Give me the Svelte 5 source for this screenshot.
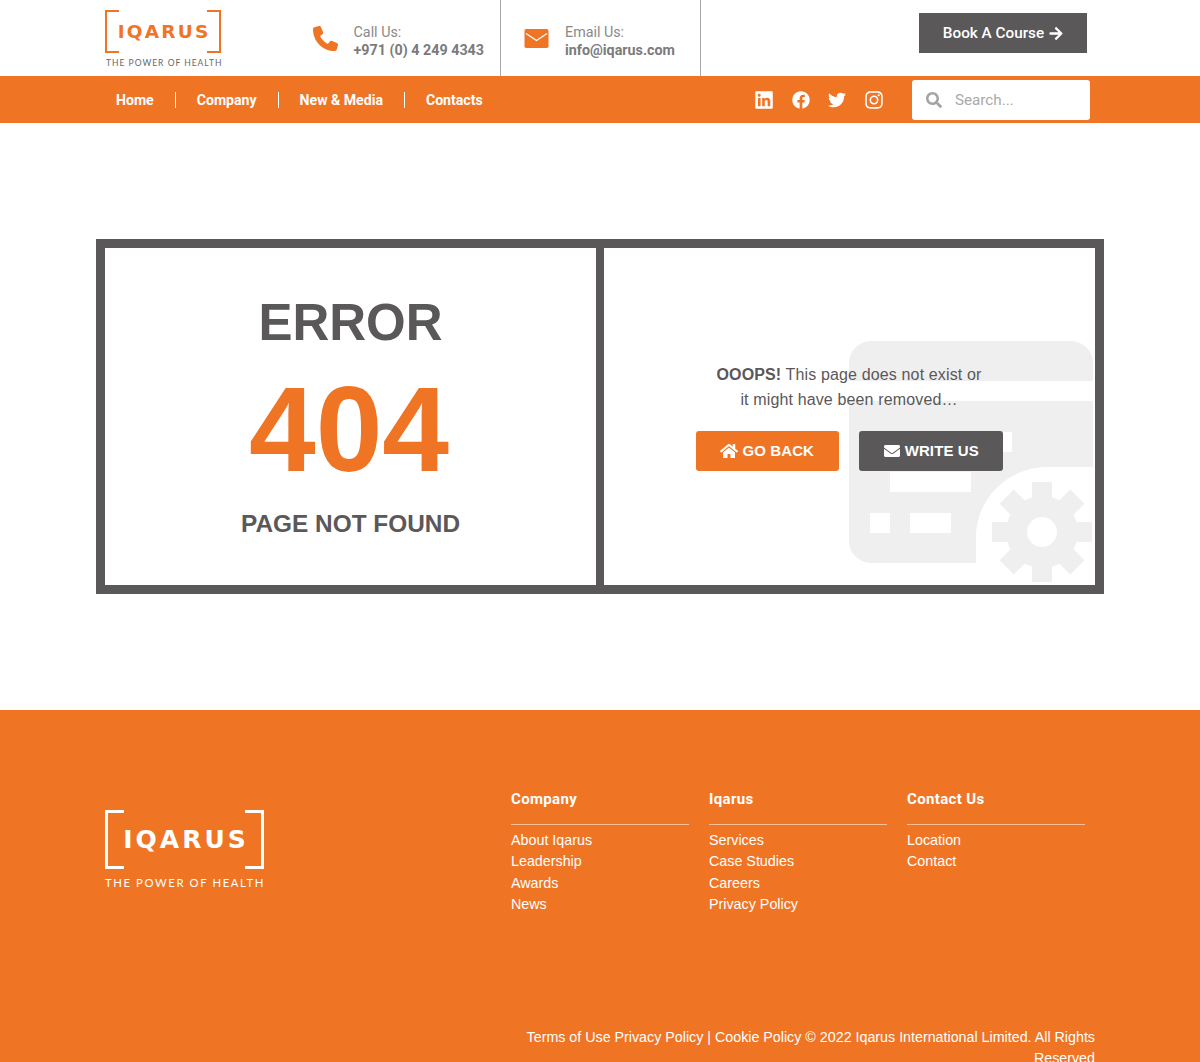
<script>
  const nav = ['Home', 'Company', 'New & Media', 'Contacts'];
  const cols = [
    { title: 'Company', links: ['About Iqarus', 'Leadership', 'Awards', 'News'] },
    { title: 'Iqarus', links: ['Services', 'Case Studies', 'Careers', 'Privacy Policy'] },
    { title: 'Contact Us', links: ['Location', 'Contact'] }
  ];
  const teeth = [0, 45, 90, 135, 180, 225, 270, 315];
</script>

<div class="page">
  <header class="top">
    <div class="logo">
      <div class="mark">
        <span class="word">IQARUS</span>
      </div>
      <div class="tag">THE POWER OF HEALTH</div>
    </div>
    <div class="contact call">
      <svg class="ci phone" viewBox="0 0 512 512"><path d="M164.900 24.600c-7.700-18.600-28-28.500-47.400-23.200l-88 24C12.100 30.200 0 46 0 64C0 311.400 200.600 512 448 512c18 0 33.800-12.100 38.600-29.500l24-88c5.300-19.400-4.600-39.700-23.200-47.400l-96-40c-16.300-6.800-35.200-2.100-46.300 11.600L304.700 368C234.300 334.700 177.300 277.700 144 207.300L193.300 167c13.700-11.200 18.400-30 11.600-46.300l-40-96z"/></svg>
      <div class="ct"><span>Call Us:</span><b>+971 (0) 4 249 4343</b></div>
    </div>
    <div class="contact email">
      <svg class="ci env" viewBox="0 0 24 19"><rect width="24" height="19" rx="1.800"/><path d="M1.500 4.500 12 11.500 22.500 4.500" fill="none" stroke="#fff" stroke-width="1.300"/></svg>
      <div class="ct"><span>Email Us:</span><b>info@iqarus.com</b></div>
    </div>
    <a class="book" href="#book">Book A Course
      <svg viewBox="0 0 448 512"><path d="M190.500 66.900l22.200-22.200c9.400-9.400 24.600-9.400 33.900 0L441 239c9.400 9.400 9.400 24.600 0 33.900L246.600 467.300c-9.400 9.400-24.600 9.400-33.900 0l-22.200-22.200c-9.500-9.500-9.300-25 .4-34.300L311.400 296H24c-13.300 0-24-10.700-24-24v-32c0-13.300 10.700-24 24-24h287.400L190.900 101.200c-9.800-9.300-10-24.800-.4-34.300z"/></svg>
    </a>
  </header>

  <nav class="bar">
    <ul class="menu">
      {#each nav as item}<li><a href="#x">{item}</a></li>{/each}
    </ul>
    <div class="social">
      <svg viewBox="0 0 448 512"><path d="M416 32H31.900C14.300 32 0 46.500 0 64.300v383.400C0 465.500 14.300 480 31.900 480H416c17.600 0 32-14.500 32-32.300V64.300c0-17.800-14.400-32.300-32-32.300zM135.400 416H69V202.200h66.500V416zm-33.200-243c-21.300 0-38.500-17.300-38.500-38.500S80.900 96 102.200 96c21.200 0 38.500 17.300 38.500 38.500 0 21.300-17.200 38.500-38.500 38.500zm282.100 243h-66.400V312c0-24.800-.5-56.700-34.500-56.700-34.600 0-39.900 27-39.900 54.900V416h-66.400V202.200h63.700v29.200h.9c8.900-16.800 30.600-34.500 62.900-34.500 67.200 0 79.700 44.300 79.700 101.900V416z"/></svg>
      <svg viewBox="0 0 512 512"><path d="M504 256C504 119 393 8 256 8S8 119 8 256c0 123.780 90.690 226.380 209.250 245V327.690h-63V256h63v-54.640c0-62.150 37-96.480 93.670-96.480 27.140 0 55.520 4.840 55.520 4.840v61h-31.280c-30.800 0-40.410 19.120-40.410 38.730V256h68.780l-11 71.690h-57.780V501C413.310 482.380 504 379.780 504 256z"/></svg>
      <svg viewBox="0 0 512 512"><path d="M459.370 151.716c.325 4.548.325 9.097.325 13.645 0 138.720-105.583 298.558-298.558 298.558-59.452 0-114.680-17.219-161.137-47.106 8.447.974 16.568 1.299 25.340 1.299 49.055 0 94.213-16.568 130.274-44.832-46.132-.975-84.792-31.188-98.112-72.772 6.498.974 12.995 1.624 19.818 1.624 9.421 0 18.843-1.3 27.614-3.573-48.081-9.747-84.143-51.980-84.143-102.985v-1.299c13.969 7.797 30.214 12.670 47.431 13.319-28.264-18.843-46.781-51.005-46.781-87.391 0-19.492 5.197-37.360 14.294-52.954 51.655 63.675 129.300 105.258 216.365 109.807-1.624-7.797-2.599-15.918-2.599-24.040 0-57.828 46.782-104.934 104.934-104.934 30.213 0 57.502 12.670 76.670 33.137 23.715-4.548 46.456-13.320 66.599-25.340-7.798 24.366-24.366 44.833-46.132 57.827 21.117-2.273 41.584-8.122 60.426-16.243-14.292 20.791-32.161 39.308-52.628 54.253z"/></svg>
      <svg viewBox="0 0 448 512"><path d="M224.100 141c-63.600 0-114.900 51.300-114.900 114.900s51.300 114.900 114.900 114.900S339 319.500 339 255.900 287.700 141 224.100 141zm0 189.600c-41.100 0-74.700-33.500-74.700-74.700s33.500-74.700 74.700-74.700 74.700 33.500 74.700 74.700-33.600 74.700-74.700 74.700zm146.400-194.300c0 14.900-12 26.800-26.800 26.800-14.900 0-26.800-12-26.800-26.800s12-26.800 26.800-26.800 26.800 12 26.800 26.800zm76.100 27.200c-1.700-35.900-9.900-67.700-36.200-93.900-26.200-26.200-58-34.400-93.900-36.200-37-2.100-147.900-2.100-184.900 0-35.800 1.700-67.600 9.900-93.900 36.100s-34.400 58-36.200 93.900c-2.100 37-2.100 147.900 0 184.900 1.700 35.900 9.900 67.700 36.200 93.900s58 34.400 93.900 36.200c37 2.100 147.900 2.100 184.900 0 35.900-1.700 67.700-9.900 93.900-36.200 26.200-26.200 34.400-58 36.200-93.900 2.100-37 2.100-147.800 0-184.800zM398.800 388c-7.800 19.600-22.900 34.700-42.600 42.600-29.500 11.700-99.500 9-132.100 9s-102.700 2.600-132.100-9c-19.600-7.800-34.700-22.900-42.600-42.600-11.700-29.500-9-99.500-9-132.100s-2.600-102.700 9-132.100c7.800-19.600 22.900-34.700 42.600-42.600 29.500-11.700 99.500-9 132.100-9s102.700-2.600 132.100 9c19.600 7.800 34.700 22.900 42.600 42.600 11.700 29.500 9 99.500 9 132.100s2.700 102.700-9 132.100z"/></svg>
    </div>
    <label class="search">
      <svg viewBox="0 0 512 512"><path d="M505 442.700L405.300 343c-4.500-4.500-10.600-7-17-7H372c27.600-35.300 44-79.700 44-128C416 93.100 322.900 0 208 0S0 93.100 0 208s93.100 208 208 208c48.300 0 92.700-16.400 128-44v16.300c0 6.400 2.500 12.500 7 17l99.700 99.700c9.400 9.400 24.600 9.400 33.900 0l28.300-28.300c9.400-9.400 9.400-24.600.1-34zM208 336c-70.700 0-128-57.200-128-128 0-70.700 57.200-128 128-128 70.700 0 128 57.200 128 128 0 70.700-57.200 128-128 128z"/></svg>
      <input type="text" placeholder="Search..." />
    </label>
  </nav>

  <main class="main">
    <section class="frame">
      <div class="left">
        <h1>ERROR</h1>
        <div class="code">404</div>
        <h2>PAGE NOT FOUND</h2>
      </div>
      <div class="right">
        <svg class="bg" viewBox="0 0 244 245" width="244" height="245" aria-hidden="true">
          <rect x="0" y="1" width="244" height="222" rx="22" fill="#efefef"/>
          <rect x="0" y="41" width="244" height="20" fill="#fff"/>
          <rect x="82" y="92" width="81" height="20" fill="#fff"/>
          <rect x="41" y="132" width="81" height="20" fill="#fff"/>
          <rect x="21" y="173" width="20" height="20" fill="#fff"/>
          <rect x="61" y="173" width="41" height="20" fill="#fff"/>
          <path d="M127 245V197C127 158 160 127 198 127H244V245Z" fill="#fff"/>
          <g fill="#efefef">
            {#each teeth as a}
              <rect x="183" y="142" width="20" height="30" transform="rotate({a} 193 192)"/>
            {/each}
            <path fill-rule="evenodd" d="M193 156a36 36 0 1 0 .01 0ZM193 177a15 15 0 1 1-.01 0Z"/>
          </g>
        </svg>
        <div class="msg">
          <p><b>OOOPS!</b> This page does not exist or<br />it might have been removed…</p>
          <div class="btns">
            <a class="btn orange" href="#back">
              <svg viewBox="0 0 576 512"><path d="M280.370 148.260L96 300.110V464a16 16 0 0 0 16 16l112.060-.29a16 16 0 0 0 15.920-16V368a16 16 0 0 1 16-16h64a16 16 0 0 1 16 16v95.640a16 16 0 0 0 16 16.050L464 480a16 16 0 0 0 16-16V300L295.670 148.260a12.190 12.190 0 0 0-15.300 0zM571.600 251.470L488 182.560V44.050a12 12 0 0 0-12-12h-56a12 12 0 0 0-12 12v72.610L318.470 43a48 48 0 0 0-61 0L4.340 251.470a12 12 0 0 0-1.600 16.900l25.500 31A12 12 0 0 0 45.150 301l235.220-193.740a12.190 12.190 0 0 1 15.300 0L530.900 301a12 12 0 0 0 16.900-1.600l25.500-31a12 12 0 0 0-1.700-16.930z"/></svg>
              GO BACK
            </a>
            <a class="btn grey" href="#write">
              <svg viewBox="0 0 512 512"><path d="M502.300 190.800c3.900-3.100 9.700-.2 9.700 4.700V400c0 26.500-21.500 48-48 48H48c-26.500 0-48-21.500-48-48V195.600c0-5 5.700-7.800 9.700-4.700 22.400 17.400 52.100 39.500 154.100 113.600 21.100 15.400 56.700 47.800 92.200 47.600 35.700.3 72-32.800 92.300-47.600 102-74.100 131.600-96.300 154-113.700zM256 320c23.200.4 56.600-29.200 73.400-41.400 132.700-96.300 142.800-104.700 173.400-128.700 5.800-4.500 9.200-11.500 9.200-18.900v-19c0-26.500-21.500-48-48-48H48C21.500 64 0 85.500 0 112v19c0 7.400 3.400 14.300 9.200 18.900 30.600 23.900 40.700 32.400 173.400 128.700 16.800 12.200 50.200 41.800 73.400 41.400z"/></svg>
              WRITE US
            </a>
          </div>
        </div>
      </div>
    </section>
  </main>

  <footer class="foot">
    <div class="fmain">
      <div class="flogo">
        <div class="fmark"><span class="fword">IQARUS</span></div>
        <div class="ftag">THE POWER OF HEALTH</div>
      </div>
      <div class="cols">
        {#each cols as c}
          <div class="col">
            <h4>{c.title}</h4>
            <ul>
              {#each c.links as l}<li><a href="#l">{l}</a></li>{/each}
            </ul>
          </div>
        {/each}
      </div>
    </div>
    <p class="legal">Terms of Use Privacy Policy | Cookie Policy © 2022 Iqarus International Limited. All Rights Reserved</p>
  </footer>
</div>

<style>
  :global(body) { margin: 0; background: #fff; }
  .page { height: 1062px; overflow: hidden; font-family: "Liberation Sans", Arial, sans-serif; color: #5a5859; }
  a { color: inherit; text-decoration: none; }
  ul { list-style: none; margin: 0; padding: 0; }

  .top { height: 76px; display: flex; padding-left: 105px; box-sizing: border-box; font-family: Roboto, sans-serif; }
  .logo { width: 116px; padding-top: 10px; flex: none; }
  .mark { position: relative; height: 43px; border-left: 2.500px solid #ef7525; border-right: 2.500px solid #ef7525; display: flex; align-items: center; justify-content: center; box-sizing: border-box; }
  .mark::before, .mark::after { content: ""; position: absolute; height: 43px; top: 0; box-sizing: border-box; width: 12px; border-top: 2.500px solid #ef7525; border-bottom: 2.500px solid #ef7525; }
  .mark::before { left: 0; }
  .mark::after { right: 0; }
  .word { font: 700 18.500px "DejaVu Sans", sans-serif; color: #ef7525; letter-spacing: 2.200px; margin-right: -2.200px; white-space: nowrap; }
  .tag { margin-top: 5px; font: 400 8.500px Lato, sans-serif; letter-spacing: 1px; color: #6a6869; white-space: nowrap; padding-left: 1px; }

  .contact { display: flex; align-items: center; box-sizing: border-box; flex: none; }
  .call { width: 288px; margin-left: -8px; justify-content: flex-end; padding-right: 16px; border-right: 1px solid #a9a9a9; }
  .email { width: 200px; padding-left: 23px; border-right: 1px solid #a9a9a9; }
  .ci { fill: #ef7525; flex: none; }
  .phone { width: 25px; height: 25px; margin-right: 16px; }
  .env { width: 25px; height: 19px; margin-right: 16px; }
  .ct { display: flex; flex-direction: column; font-size: 14.300px; line-height: 18.500px; color: #8a8a8a; margin-top: 6px; }
  .ct b { font-weight: 700; color: #7b7b7b; }
  .book { margin-left: 218px; margin-top: 13px; width: 168px; height: 40px; background: #5a5859; color: #fff; display: flex; align-items: center; justify-content: center; gap: 5px; font-weight: 500; font-size: 15.300px; flex: none; }
  .book svg { width: 14px; height: 15px; fill: #fff; }

  .bar { height: 47px; background: #ef7525; display: flex; align-items: center; font-family: Roboto, sans-serif; padding-left: 95px; box-sizing: border-box; }
  .menu { display: flex; color: #fff; font-weight: 700; font-size: 14.100px; width: 660px; flex: none; }
  .menu li { padding: 0 21px; line-height: 16px; border-left: 1px solid #fff; }
  .menu li:first-child { border-left: 0; }
  .social { display: flex; align-items: center; gap: 18.500px; width: 157px; flex: none; }
  .social svg { width: 18px; height: 20px; fill: #fff; }
  .search { width: 178px; height: 40px; background: #fff; border-radius: 3px; display: flex; align-items: center; padding-left: 14px; box-sizing: border-box; flex: none; }
  .search svg { width: 16px; height: 16px; fill: #a4a4a4; flex: none; }
  .search input { border: 0; outline: 0; background: none; margin-left: 13px; width: 120px; padding: 0; font: 400 15.200px Roboto, sans-serif; }
  .search input::placeholder { color: #a9a9a9; opacity: 1; }

  .main { height: 587px; padding: 116px 96px 0; box-sizing: border-box; }
  .frame { height: 355px; background: #5a5859; padding: 9px; box-sizing: border-box; display: grid; grid-template-columns: 491px 491px; gap: 8px; }
  .left, .right { background: #fff; position: relative; overflow: hidden; }
  .left { text-align: center; }
  h1, h2 { margin: 0; font-weight: 700; }
  h1 { font-size: 51px; line-height: 60px; margin-top: 45px; }
  .code { font-size: 120px; line-height: 130px; font-weight: 700; color: #ef7525; margin-top: 11px; padding-right: 3px; }
  h2 { font-size: 24.400px; line-height: 30px; margin-top: 15px; }
  .bg { position: absolute; left: 245px; top: 92px; }
  .msg { position: relative; padding-top: 115px; padding-right: 1px; text-align: center; }
  .msg p { margin: 0; font-size: 16px; line-height: 24.500px; letter-spacing: .14px; }
  .btns { display: flex; justify-content: center; gap: 20px; margin-top: 19px; }
  .btn { width: 143.500px; height: 40px; padding-bottom: 1px; box-sizing: border-box; border-radius: 3px; color: #fff; font-weight: 700; font-size: 15px; letter-spacing: .1px; display: flex; align-items: center; justify-content: center; gap: 4px; }
  .btn svg { width: 18px; height: 16px; fill: #fff; }
  .orange { background: #ef7525; }
  .grey { background: #5a5859; }

  .foot { background: #ef7525; height: 352px; color: #fff; padding: 78px 105px 0; box-sizing: border-box; }
  .fmain { display: flex; height: 239px; }
  .flogo { width: 159px; padding-top: 22px; flex: none; }
  .fmark { position: relative; height: 59px; border-left: 3.500px solid #fff; border-right: 3.500px solid #fff; box-sizing: border-box; display: flex; align-items: center; justify-content: center; }
  .fmark::before, .fmark::after { content: ""; position: absolute; top: 0; height: 59px; width: 16px; box-sizing: border-box; border-top: 3.500px solid #fff; border-bottom: 3.500px solid #fff; }
  .fmark::before { left: 0; }
  .fmark::after { right: 0; }
  .fword { font: 700 25px "DejaVu Sans", sans-serif; letter-spacing: 3px; margin-right: -3px; white-space: nowrap; }
  .ftag { margin-top: 7px; font: 400 11.300px Lato, sans-serif; letter-spacing: 1.600px; white-space: nowrap; }
  .cols { margin-left: 247px; display: flex; gap: 20.500px; }
  .col { width: 177.500px; }
  h4 { margin: 0; font: 700 15px/22px Roboto, sans-serif; letter-spacing: .35px; height: 36px; border-bottom: 1px solid rgba(255,255,255,.55); }
  .col ul { margin-top: 5px; font-size: 14.300px; line-height: 21.300px; }
  .legal { margin: 0 0 0 auto; width: 590px; text-align: right; font-size: 14.280px; line-height: 21.300px; }
</style>
